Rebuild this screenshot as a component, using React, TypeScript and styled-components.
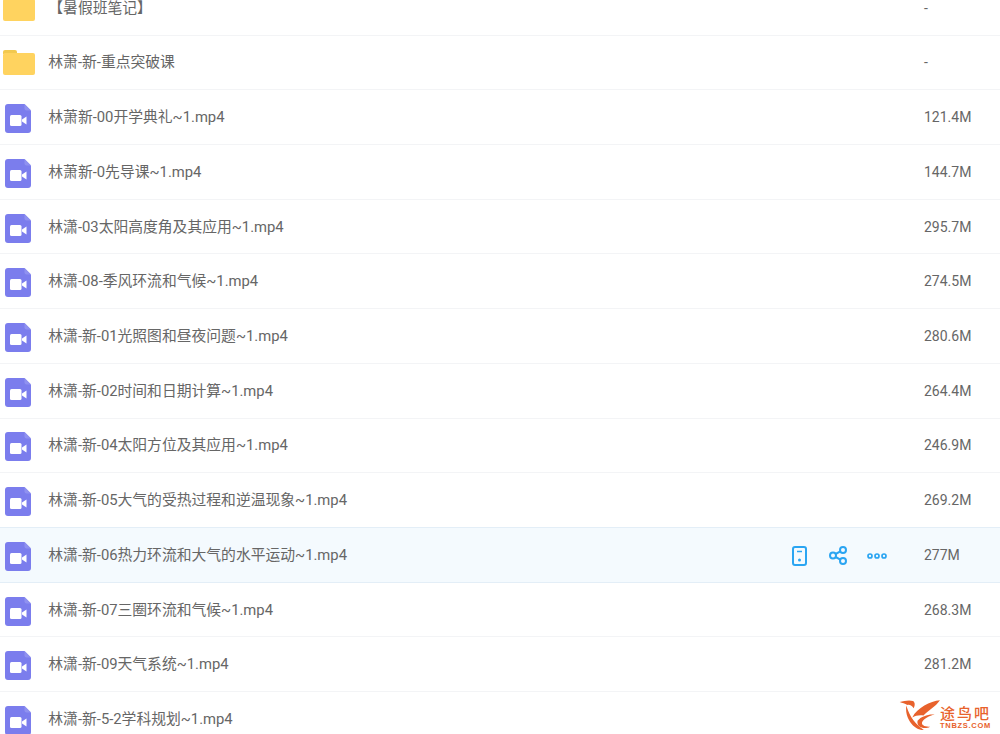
import React from 'react'
import styled, { createGlobalStyle } from 'styled-components'

const files = [
  { name: '【暑假班笔记】', size: '-', folder: true },
  { name: '林萧-新-重点突破课', size: '-', folder: true },
  { name: '林萧新-00开学典礼~1.mp4', size: '121.4M' },
  { name: '林萧新-0先导课~1.mp4', size: '144.7M' },
  { name: '林潇-03太阳高度角及其应用~1.mp4', size: '295.7M' },
  { name: '林潇-08-季风环流和气候~1.mp4', size: '274.5M' },
  { name: '林潇-新-01光照图和昼夜问题~1.mp4', size: '280.6M' },
  { name: '林潇-新-02时间和日期计算~1.mp4', size: '264.4M' },
  { name: '林潇-新-04太阳方位及其应用~1.mp4', size: '246.9M' },
  { name: '林潇-新-05大气的受热过程和逆温现象~1.mp4', size: '269.2M' },
  { name: '林潇-新-06热力环流和大气的水平运动~1.mp4', size: '277M', active: true },
  { name: '林潇-新-07三圈环流和气候~1.mp4', size: '268.3M' },
  { name: '林潇-新-09天气系统~1.mp4', size: '281.2M' },
  { name: '林潇-新-5-2学科规划~1.mp4', size: '' },
]

function FolderIcon() {
  return (
    <svg width="32" height="26" viewBox="0 0 32 26">
      <path d="M0 3a2 2 0 0 1 2-2h10a2 2 0 0 1 2 2v2H0z" fill="#f2c94f" />
      <rect x="0" y="4" width="32" height="22" rx="2" fill="#ffd35f" />
    </svg>
  )
}

function VideoIcon() {
  return (
    <svg width="26" height="29" viewBox="0 0 26 29">
      <path
        d="M3 0H19.5L26 6.5V26a3 3 0 0 1-3 3H3a3 3 0 0 1-3-3V3a3 3 0 0 1 3-3z"
        fill="#7b7ded"
      />
      <path d="M19.5 0L26 6.5h-4.5a2 2 0 0 1-2-2z" fill="#8f91f0" />
      <rect x="5" y="11" width="11.5" height="11" rx="1.5" fill="#fff" />
      <path d="M17 15.5l4.5-3v8l-4.5-3z" fill="#fff" />
    </svg>
  )
}

function PhoneIcon() {
  return (
    <svg width="15" height="20" viewBox="0 0 15 20" fill="none" stroke="#2aa5f2" strokeWidth="2">
      <rect x="1" y="1" width="13" height="18" rx="2" />
      <path d="M5 5.5h5" strokeWidth="1.5" />
      <circle cx="7.5" cy="14" r="1.5" fill="#2aa5f2" stroke="none" />
    </svg>
  )
}

function ShareIcon() {
  return (
    <svg width="18" height="19" viewBox="0 0 18 19" fill="none" stroke="#2aa5f2" strokeWidth="2">
      <circle cx="4" cy="9.5" r="3" />
      <circle cx="14" cy="4" r="3" />
      <circle cx="14" cy="15" r="3" />
      <path d="M6.6 8l4.8-2.6M6.6 11l4.8 2.6" />
    </svg>
  )
}

function MoreIcon() {
  return (
    <svg width="20" height="6" viewBox="0 0 20 6" fill="none" stroke="#2aa5f2" strokeWidth="1.7">
      <circle cx="3" cy="3" r="2" />
      <circle cx="10" cy="3" r="2" />
      <circle cx="17" cy="3" r="2" />
    </svg>
  )
}

function LogoMark() {
  return (
    <svg width="43" height="33" viewBox="60 50 130 100" fill="#e8622c">
      <path d="M62 65C75 62 90 58 102 62c8 4 6 16 2 22-4-8-12-12-19-10-7-4-15-6-23-9z" />
      <path d="M82 76c6 19 16 49 53 74-15 2-35-10-45-30-8-15-10-30-8-44z" />
      <path d="M184 60c-30 3-68 22-84 52 10-6 22-8 34-6 16-16 36-26 50-46z" />
      <path d="M116 122c12-15 40-22 52-18-17 2-32 12-38 22-3 9 7 15 24 14-17 10-42 2-38-18z" />
    </svg>
  )
}

export default function App() {
  return (
    <>
      <GlobalStyle />
      <Page>
        <FileList>
          {files.map((file) => (
            <FileRow key={file.name} $active={!!file.active}>
              <IconCell $folder={!!file.folder}>
                {file.folder ? <FolderIcon /> : <VideoIcon />}
              </IconCell>
              <FileName>{file.name}</FileName>
              {file.active && (
                <Actions>
                  <PhoneIcon />
                  <ShareIcon />
                  <MoreIcon />
                </Actions>
              )}
              <FileSize>{file.size}</FileSize>
            </FileRow>
          ))}
        </FileList>
        <Watermark>
          <LogoMark />
          <WatermarkText>
            <WatermarkName>途鸟吧</WatermarkName>
            <WatermarkUrl>TNBZS.COM</WatermarkUrl>
          </WatermarkText>
        </Watermark>
      </Page>
    </>
  )
}

const GlobalStyle = createGlobalStyle`
  html, body {
    margin: 0;
    padding: 0;
    background: #fff;
    overflow: hidden;
  }
`

const Page = styled.div`
  position: relative;
  width: 1000px;
  height: 734px;
  overflow: hidden;
  font-family: Roboto, 'Noto Sans CJK SC', sans-serif;
  font-size: 14.8px;
  color: #666;
`

const FileList = styled.div`
  margin-top: -19.2px;
`

const FileRow = styled.div<{ $active: boolean }>`
  display: flex;
  align-items: center;
  box-sizing: border-box;
  height: 54.73px;
  border-bottom: 1px solid ${(p) => (p.$active ? '#e3eef7' : '#f3f4f6')};
  background: ${(p) => (p.$active ? '#f4fafe' : '#fff')};
  box-shadow: ${(p) => (p.$active ? '0 -1px 0 #e3eef7' : 'none')};
`

const IconCell = styled.div<{ $folder: boolean }>`
  display: flex;
  justify-content: center;
  width: 32px;
  margin-top: ${(p) => (p.$folder ? '0' : '3px')};
  margin-left: ${(p) => (p.$folder ? '3px' : '2px')};
  margin-right: ${(p) => (p.$folder ? '14px' : '15px')};
`

const FileName = styled.div`
  flex: 1;
  margin-left: -0.7px;
  line-height: 20px;
  white-space: nowrap;
`

const Actions = styled.div`
  display: flex;
  align-items: center;
  gap: 23px;
  margin-right: 37px;
  margin-top: 2px;

  svg:nth-child(2) {
    margin-left: -1px;
  }

  svg:nth-child(3) {
    margin-left: -3px;
  }
`

const FileSize = styled.div`
  width: 76px;
  font-size: 14px;
  line-height: 20px;
`

const Watermark = styled.div`
  position: absolute;
  right: 9px;
  bottom: 4px;
  display: flex;
  align-items: flex-end;
  gap: 0;
`

const WatermarkText = styled.div`
  display: flex;
  flex-direction: column;
  align-items: center;
  margin-left: -2px;
`

const WatermarkName = styled.span`
  font-size: 15px;
  line-height: 16px;
  letter-spacing: 2px;
  font-weight: 500;
  color: #e8622c;
`

const WatermarkUrl = styled.span`
  font-family: 'Liberation Sans', sans-serif;
  font-size: 7.5px;
  font-weight: 700;
  line-height: 8px;
  letter-spacing: 0.7px;
  color: #e8622c;
`
